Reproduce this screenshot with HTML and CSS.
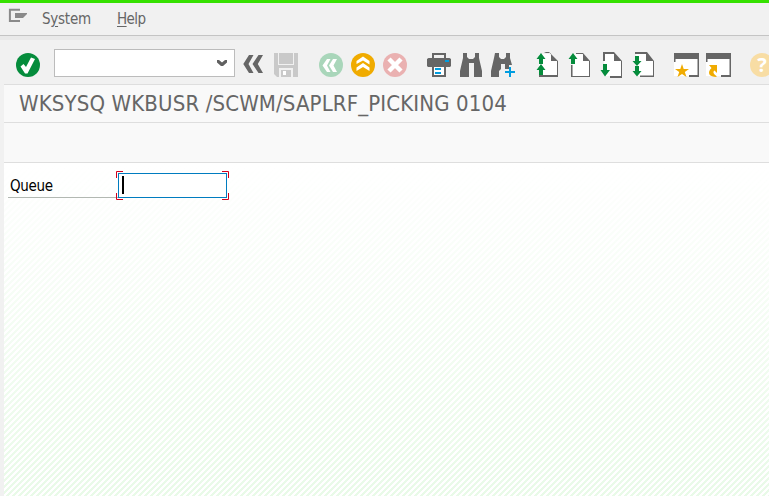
FILE: index.html
```html
<!DOCTYPE html>
<html lang="en">
<head>
<meta charset="utf-8">
<title>WKSYSQ WKBUSR</title>
<link rel="stylesheet" href="styles.css">
</head>
<body>
<div class="window">
<nav class="menu">
<svg class="menu-icon" viewBox="8 8 20 16"><path d="M20 9.7H9.9V21H20" fill="none" stroke="#8a8a8a" stroke-width="2"/><path d="M15 13h12v1l-4 4h-8z" fill="#8a8a8a"/></svg>
<span class="menu-item system">S<u>y</u>stem</span>
<span class="menu-item help"><u>H</u>elp</span>
</nav>
<div class="toolbar">
<svg class="ok" viewBox="12 48 32 34"><circle cx="28" cy="65" r="12" fill="#058c3c"/><path d="M20.500 66.500l3-2.500 2.500 3 5-9.500 4 1.500-7.500 14.500h-2.500z" fill="#fff"/></svg>
<div class="command"><svg class="chevron" viewBox="216 58 12 10"><path d="M217 60h2l3 2.6 3-2.6h2v2.5l-4 3.500h-2l-4-3.500z" fill="#606060"/></svg></div>
<div class="group">
<svg viewBox="238 48 32 34"><path d="M249 55h4.500l-5 9 5 9H249l-5.700-9zM258.500 55h4.500l-5.200 9 5.200 9h-4.500l-6-9z" fill="#666"/></svg>
<svg viewBox="270 48 32 34"><path d="M274 53h24v24h-21l-3-3z" fill="#c9c9c9"/><path d="M278 53h1v11h14V53h1v12h-16zM279 68h14v9h-14z" fill="#f1f1f1"/><path d="M281 70h10v7h-10z" fill="#c9c9c9"/><path d="M283 71h3v4h-3z" fill="#fff"/></svg>
</div>
<div class="group">
<svg viewBox="315 48 32 34"><circle cx="331" cy="65" r="12" fill="#a9d6ba"/><path d="M327 59h3.500l-3.500 6.500 3.500 6.500H327l-4.500-6.500zM333 59h4l-3.500 6.500L337 72h-4l-4-6.500z" fill="#fff"/></svg>
<svg viewBox="347 48 32 34"><circle cx="363" cy="65" r="12" fill="#f0ab00"/><path d="M356.500 64v-3l6.500-4.500 6.500 4.500v3.500l-6.500-4zM356.500 71v-3.500l6.500-4.500 6.500 4.500V71l-6.500-4z" fill="#fff"/></svg>
<svg viewBox="379 48 32 34"><circle cx="395" cy="65" r="12" fill="#eab1b1"/><path d="M389 59l12 12M401 59L389 71" stroke="#fff" stroke-width="4.500"/></svg>
</div>
<div class="group">
<svg viewBox="423 48 32 34"><path d="M433 58v-4h12v4" fill="none" stroke="#666" stroke-width="2"/><path d="M427 59l1.500-1h21l1.500 1v7l-1 1h-22l-1-1z" fill="#666"/><path d="M433 67v9h12v-9" fill="#fff" stroke="#666" stroke-width="2"/><path d="M445 60h4v2h-4zM435 68h6v2h-6zM435 72h6v2h-6z" fill="#009de0"/></svg>
<svg viewBox="455 48 32 34"><path d="M463 53h4v4l2 2h4l2-2v-4h4v5l3 13v6h-8V63h-5v14h-9v-6l3-13z" fill="#666"/></svg>
<svg viewBox="487 48 32 34"><path d="M495 53h4v4l2 2h3l2-2v-4h4v5l2 7h-3v4h-4v-5h-4v5l-2 2v6h-8v-6l3-13z" fill="#666"/><path d="M505 71h10v2h-10zM509 67h2v10h-2z" fill="#009de0"/></svg>
</div>
<div class="group">
<svg viewBox="531 48 32 34"><path d="M539 54h10l8 7v15h-18z" fill="#fff"/><path d="M544 52h5l9 9v16h-19v-2h18V61h-6v-8h-5z" fill="#666"/><path d="M541 53l4.500 6H543v5h-4v-5h-2.500zM541 64l4.500 6H543v5h-4v-5h-2.500z" fill="#058c3c"/></svg>
<svg viewBox="563 48 32 34"><path d="M573 54h9l7 7v15h-16z" fill="#fff"/><path d="M576 53h7l7 8v16h-19V65h1.500v11H589V61h-6v-7h-7z" fill="#666"/><path d="M573 53l4.500 6H575v5h-4v-5h-2.500z" fill="#058c3c"/></svg>
<svg viewBox="595 48 32 34"><path d="M604 54h10l7 7v15h-17z" fill="#fff"/><path d="M603 52h11l8 9v17h-12v-2h11V61h-7v-7h-9v7h-2z" fill="#666"/><path d="M603 64h4v6h3l-5 6.500-4.500-6.500h2.500z" fill="#058c3c"/></svg>
<svg viewBox="627 48 32 34"><path d="M636 54h10l7 7v15h-17z" fill="#fff"/><path d="M635 52h12l7 9v16h-14v-1.500h13V61h-7v-7h-11z" fill="#666"/><path d="M635 56h4v5h2.500l-4.500 5-4.500-5h2.500zM635 66h4v5h2.500l-4.500 5.500-4.500-5.500h2.500z" fill="#058c3c"/></svg>
</div>
<div class="group">
<svg viewBox="670 48 32 34"><path d="M674 58h24v18h-24z" fill="#fff"/><path d="M674 53h25v24h-10v-2h8.500V59H675.500v3H674z" fill="#666"/><path d="M682 64l1.700 5h5.300l-4.200 3 1.700 5-4.500-3-4.500 3 1.700-5-4.200-3h5.300z" fill="#f0ab00"/></svg>
<svg viewBox="702 48 32 34"><path d="M706 58h24v18h-24z" fill="#fff"/><path d="M706 53h25v24h-10v-2h8.500V59H707.500v3H706z" fill="#666"/><path d="M709 65h8v8l-2.500-2.500c-2 1.500-1 3.500 2 5.500v1c-7 0-10-4-5-9z" fill="#f0ab00"/></svg>
</div>
<div class="help-button">?</div>
</div>
<main class="content">
<h1 class="title">WKSYSQ WKBUSR /SCWM/SAPLRF_PICKING 0104</h1>
<div class="app-bar"></div>
<div class="form">
<label class="label" for="queue">Queue</label>
<div class="field" id="queue"><i class="caret"></i>
<svg class="corners" viewBox="0 0 113 29"><path d="M.5 7V.5H7M106 .5h6.500V7M.5 22v6.500H7M106 28.500h6.500V22" fill="none" stroke="#d1001c"/></svg></div>
</div>
</main>
</div>
</body>
</html>
```

FILE: styles.css
```css
* { box-sizing: border-box; }
body { margin: 0; overflow: hidden; }
.window {
  width: 769px; height: 496px; overflow: hidden;
  display: flex; flex-direction: column;
  background: #f1f1f1; border-top: 3px solid #36e100;
  font-family: Tahoma, "DejaVu Sans Condensed", "DejaVu Sans", sans-serif;
  font-stretch: condensed;
}
.menu {
  height: 33px; flex: none; display: flex; align-items: flex-start;
  border-bottom: 1px solid #c4c4c4; color: #666; font-size: 15px; line-height: 20px;
}
.menu-icon { width: 20px; height: 16px; margin: 5px 0 0 8px; }
.menu-item { margin-top: 6px; white-space: nowrap; }
.system { margin-left: 14px; width: 75px; letter-spacing: -0.25px; }
.help { letter-spacing: -0.55px; }
u { text-decoration-thickness: 1px; text-underline-offset: 2px; }
.toolbar {
  height: 48px; flex: none; display: flex; align-items: flex-start;
  padding: 12px 0 0 12px; border-top: 4px solid #e9e9e9;
  overflow: hidden;
}
.toolbar svg { flex: none; }
.ok, .group svg { width: 32px; height: 34px; margin-top: -4px; }
.command {
  width: 181px; height: 28px; margin: -3px 3px 0 10px; flex: none;
  border: 1px solid #bcbcbc; background: #fff;
  display: flex; justify-content: flex-end;
}
.chevron { width: 12px; height: 10px; margin: 8px 6px 0 0; }
.group { display: flex; flex: none; margin-right: 12px; }
.group:nth-of-type(2) { margin-right: 13px; }
.group:nth-of-type(5) { margin-right: 11px; }
.group:nth-of-type(6) { margin-right: 16px; }
.help-button {
  width: 24px; height: 24px; flex: none; margin-top: 1px; border-radius: 50%;
  background: #f8dda4; color: #fff; font: bold 20px/24px "Open Sans", sans-serif;
  text-align: center;
}
.content {
  flex: 1; margin-left: 4px;
  background:
    linear-gradient(#fff 0, #fff 80px, rgba(255,255,255,0) 100%),
    repeating-linear-gradient(135deg, #e9fae8 0, #e9fae8 2.1213px, #fff 2.1213px, #fff 4.2426px);
}
.title {
  height: 39px; margin: 0; padding-left: 15px;
  border-top: 1px solid #dedede; border-bottom: 1px solid #dedede;
  background: #f9f9f9; color: #666;
  font-size: 22px; font-weight: 400; line-height: 37px; letter-spacing: 0.13px;
  white-space: nowrap;
}
.app-bar { height: 40px; background: #f9f9f9; border-bottom: 1px solid #dedede; }
.form { display: flex; padding: 10px 0 0 4px; }
.label {
  width: 110px; height: 25px; padding-left: 2px; border-bottom: 1px solid #b2b8b2;
  color: #000; font-size: 15px; line-height: 26px; letter-spacing: -0.3px;
}
.field {
  width: 109px; height: 25px; position: relative;
  background: #fff; border: 1px solid #007cc0; padding: 2px 0 0 3px;
}
.caret { display: block; width: 2px; height: 18px; background: #000; }
.corners { position: absolute; left: -3px; top: -3px; width: 113px; height: 29px; }
```
